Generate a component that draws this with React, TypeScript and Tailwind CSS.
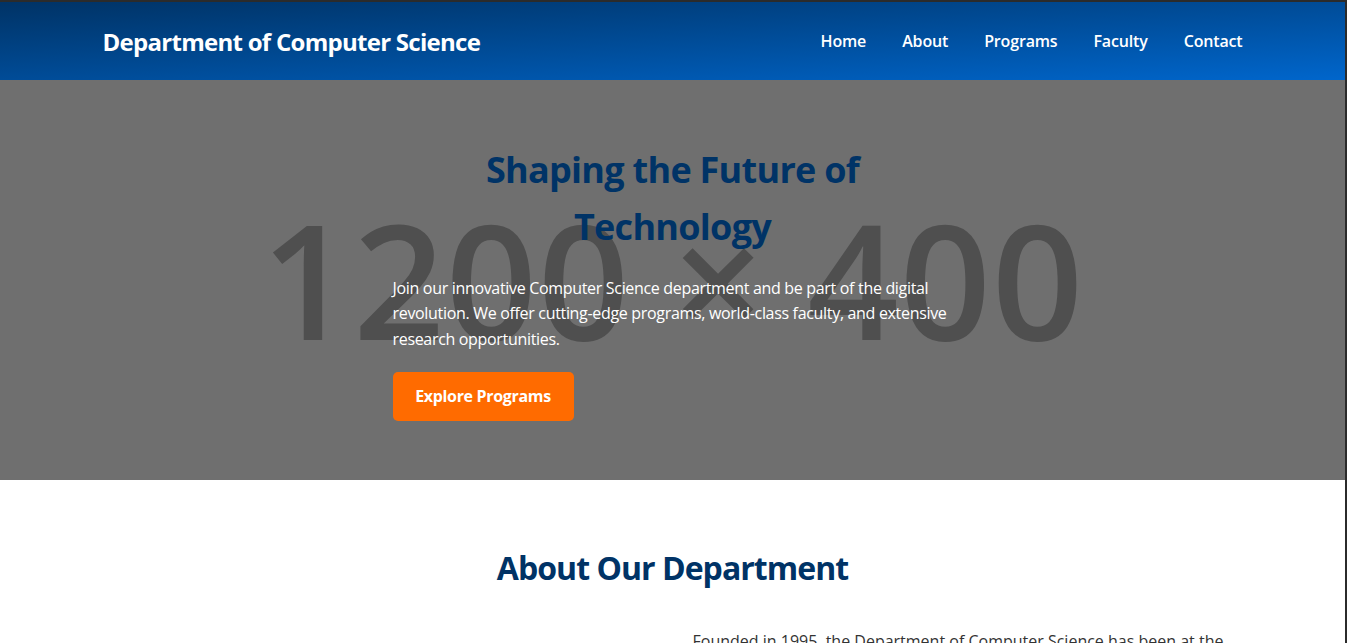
import React from 'react';

const navLinks = ['Home', 'About', 'Programs', 'Faculty', 'Contact'];

const App: React.FC = () => {
  return (
    <div className="min-h-screen bg-white border-t-2 border-r-2 border-[#2b2b2b] text-[#333] leading-[1.6] font-['Open_Sans','Noto_Sans',sans-serif]">
      {/* Header */}
      <header className="h-[78px] bg-gradient-to-br from-[#003366] to-[#0066cc] text-white">
        <div className="max-w-[1200px] mx-auto px-[30px] h-full flex items-center justify-between">
          <h1 className="text-[24px] font-bold tracking-[-0.03em] mt-[3px]">Department of Computer Science</h1>
          <nav className="flex items-center gap-[36px] text-[16px] font-semibold tracking-[-0.01em] mt-[1px]">
            {navLinks.map(link => (
              <a key={link} href="#" className="text-white">{link}</a>
            ))}
          </nav>
        </div>
      </header>

      {/* Hero */}
      <section className="relative h-[400px] bg-[#6f6f6f] overflow-hidden flex items-center justify-center">
        {/* placeholder image text */}
        <div className="absolute inset-0 flex items-center justify-center pointer-events-none">
          <span className="text-[160px] font-semibold text-[#4f4f4f] leading-none tracking-[0.005em] mt-[-5px]">1200 × 400</span>
        </div>
        <div className="relative max-w-[600px] w-full px-5 mt-[2px]">
          <h2 className="text-[36px] font-bold text-[#003366] text-center leading-[1.6] tracking-[-0.02em]">
            Shaping the Future of<br />Technology
          </h2>
          <p className="mt-[20px] text-[16px] text-white leading-[1.6] tracking-[-0.02em]">
            Join our innovative Computer Science department and be part of the digital revolution. We offer cutting-edge programs, world-class faculty, and extensive research opportunities.
          </p>
          <button className="mt-[20px] h-[49px] w-[181px] rounded-[5px] bg-[#ff6b00] text-white text-[16px] font-bold tracking-[-0.02em]">
            Explore Programs
          </button>
        </div>
      </section>

      {/* About */}
      <section className="pt-[62px] pb-16">
        <div className="max-w-[1200px] mx-auto px-5">
          <h2 className="text-[32px] font-bold text-[#003366] text-center leading-[1.6] tracking-[-0.03em]">About Our Department</h2>
          <div className="mt-[36px] grid grid-cols-2 gap-[40px]">
            <div />
            <p className="text-[16px] leading-[1.6]">
              Founded in 1995, the Department of Computer Science has been at the forefront of technological education and research. Our mission is to prepare students for successful careers in computing and to advance knowledge through innovative research.
            </p>
          </div>
        </div>
      </section>
    </div>
  );
};

export default App;
